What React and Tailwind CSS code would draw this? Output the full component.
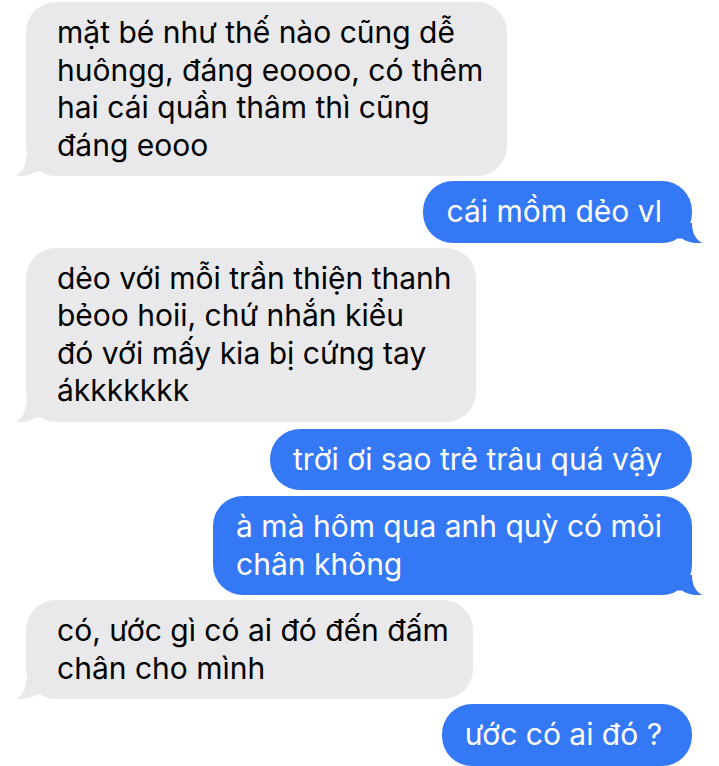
import React from "react";

const GRAY = "#e9e9eb";
const BLUE = "#3478f6";

const MESSAGES = [
  { from: "them", lines: ["mặt bé như thế nào cũng dễ", "huôngg, đáng eoooo, có thêm", "hai cái quần thâm thì cũng", "đáng eooo"], tail: true },
  { from: "me", lines: ["cái mồm dẻo vl"], tail: true },
  { from: "them", lines: ["dẻo với mỗi trần thiện thanh", "bẻoo hoii, chứ nhắn kiểu", "đó với mấy kia bị cứng tay", "ákkkkkkk"], tail: true },
  { from: "me", lines: ["trời ơi sao trẻ trâu quá vậy"], tail: false, gap: "mt-[7px]" },
  { from: "me", lines: ["à mà hôm qua anh quỳ có mỏi", "chân không"], tail: true, gap: "mt-[6px]" },
  { from: "them", lines: ["có, ước gì có ai đó đến đấm", "chân cho mình"], tail: true },
  { from: "me", lines: ["ước có ai đó ?"], tail: false },
];

// bubble tail, drawn for the right side and mirrored for the left
function Tail({ side }) {
  const color = side === "right" ? BLUE : GRAY;
  return (
    <svg
      width="24"
      height="20"
      viewBox="0 0 24 20"
      className={`absolute bottom-0 ${side === "right" ? "-right-[10px]" : "-left-[10px] -scale-x-100"}`}
    >
      <path
        d="M0 0 H14 C14 9 17 16 24 20 C18 20.6 9 19.5 4 15.5 C2.7 15.6 1.3 15.5 0 15.4 Z"
        fill={color}
      />
    </svg>
  );
}

function Bubble({ msg, index }) {
  const me = msg.from === "me";
  return (
    <div className={`flex ${me ? "justify-end" : "justify-start"} ${index === 0 ? "" : msg.gap || "mt-[5px]"}`}>
      <div
        className={`relative rounded-[30px] py-[12px] text-[30px] leading-[37.5px] whitespace-nowrap ${
          me ? "bg-[#3478f6] text-white pl-[23px] pr-[30px]" : "bg-[#e9e9eb] text-black pl-[31px] pr-[24px]"
        }`}
      >
        {msg.lines.map((l, i) => (
          <div key={i}>{l}</div>
        ))}
        {msg.tail && <Tail side={me ? "right" : "left"} />}
      </div>
    </div>
  );
}

export default function App() {
  return (
    <div
      className="w-[719px] h-[766px] overflow-hidden bg-white pt-[2px] pl-[26px] pr-[27px]"
      style={{ fontFamily: "Inter, 'Noto Sans', sans-serif" }}
    >
      {MESSAGES.map((m, i) => (
        <Bubble key={i} msg={m} index={i} />
      ))}
    </div>
  );
}
